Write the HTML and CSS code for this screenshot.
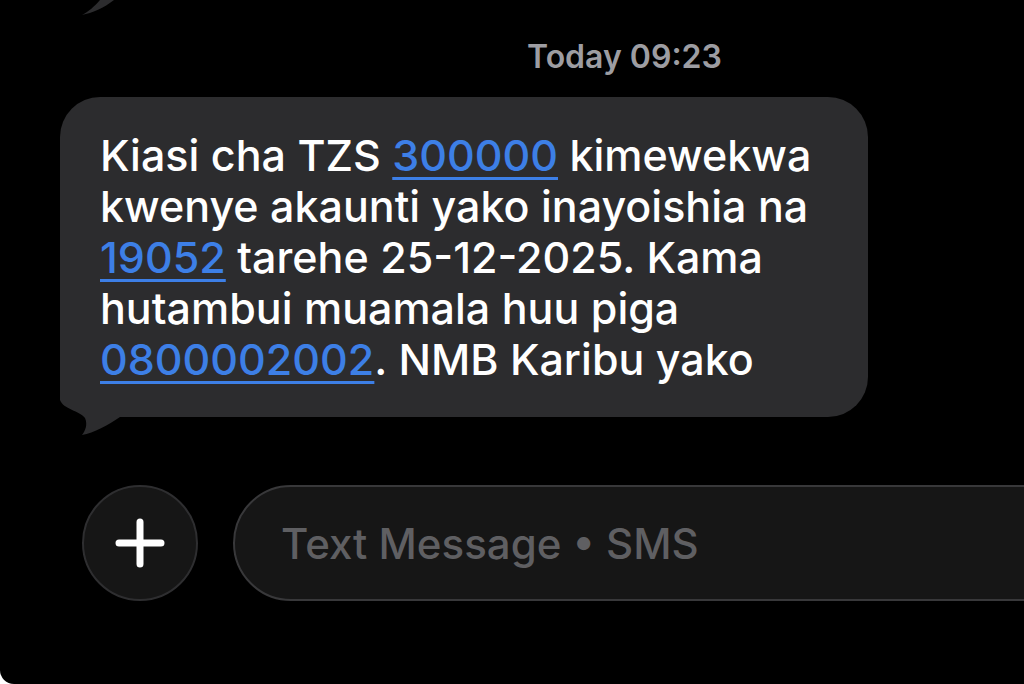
FILE: index.html
```html
<!DOCTYPE html>
<html lang="sw">
<head>
  <meta charset="UTF-8">
  <meta name="viewport" content="width=device-width, initial-scale=1.0">
  <title>Messages - NMB</title>
  <link rel="stylesheet" href="styles.css">
</head>
<body>
  <div class="screen">
    <svg class="prev-tail" width="40" height="20" viewBox="0 0 40 20">
      <path d="M20,0 C15,6 8,12 2,15 C12,13 24,8 34,0 Z" fill="#2c2c2e"/>
    </svg>

    <div class="timestamp">Today 09:23</div>

    <div class="thread">
      <div class="bubble">
        <p class="message">
          Kiasi cha TZS <a href="#">300000</a> kimewekwa<br>
          kwenye akaunti yako inayoishia na<br>
          <a href="#">19052</a> tarehe 25-12-2025. Kama<br>
          hutambui muamala huu piga<br>
          <a href="#">0800002002</a>. NMB Karibu yako
        </p>
        <svg class="tail" width="80" height="62" viewBox="0 0 80 62">
          <path d="M0,0 L0,25 C3,34 20,36 25,43 C28,50 25,56 22,60 C34,58 48,50 60,42 L80,42 L80,0 Z" fill="#2c2c2e"/>
        </svg>
      </div>
    </div>

    <div class="compose">
      <button class="plus-btn" aria-label="Add">
        <svg width="50" height="50" viewBox="0 0 50 50">
          <path d="M25 4 V46 M4 25 H46" stroke="#ffffff" stroke-width="7" stroke-linecap="round"/>
        </svg>
      </button>
      <div class="input-pill">
        <span class="placeholder">Text Message • SMS</span>
      </div>
    </div>
  </div>
</body>
</html>
```

FILE: styles.css
```css
body {
  margin: 0;
  padding: 0;
  background: #FFFFFF;
  font-family: 'Inter', 'Helvetica Neue', Arial, sans-serif;
}
.screen {
  position: relative;
  width: 1024px;
  height: 684px;
  background: #000000;
  border-bottom-left-radius: 14px;
  overflow: hidden;
  display: flex;
  flex-direction: column;
}
.prev-tail {
  position: absolute;
  left: 80px;
  top: 0;
}
.timestamp {
  padding: 37px 0 0 527px;
  font-size: 32px;
  line-height: 40px;
  font-weight: 600;
  color: #9d9da2;
}
.thread {
  display: flex;
  padding: 20px 0 0 60px;
}
.bubble {
  position: relative;
  width: 808px;
  box-sizing: border-box;
  padding: 33px 20px 32px 40px;
  background: #2c2c2e;
  border-radius: 40px;
}
.message {
  position: relative;
  z-index: 1;
  margin: 0;
  font-size: 43px;
  line-height: 51px;
  font-weight: 500;
  color: #ffffff;
  white-space: nowrap;
}
.message a {
  color: #3d7fe6;
  text-decoration: underline;
  text-decoration-thickness: 3px;
  text-underline-offset: 6px;
}
.tail {
  position: absolute;
  left: 0;
  top: 278px;
}
.compose {
  display: flex;
  align-items: center;
  gap: 35px;
  margin-top: 68px;
  padding-left: 82px;
}
.plus-btn {
  flex: none;
  width: 116px;
  height: 116px;
  border-radius: 50%;
  background: #161616;
  border: 2px solid #2e2e30;
  display: flex;
  align-items: center;
  justify-content: center;
  padding: 0;
}
.input-pill {
  flex: none;
  width: 860px;
  height: 116px;
  box-sizing: border-box;
  border-radius: 58px;
  background: #161616;
  border: 2px solid #38383a;
  display: flex;
  align-items: center;
  padding-left: 46px;
}
.placeholder {
  font-size: 42px;
  font-weight: 500;
  color: #5f5f62;
}
```
